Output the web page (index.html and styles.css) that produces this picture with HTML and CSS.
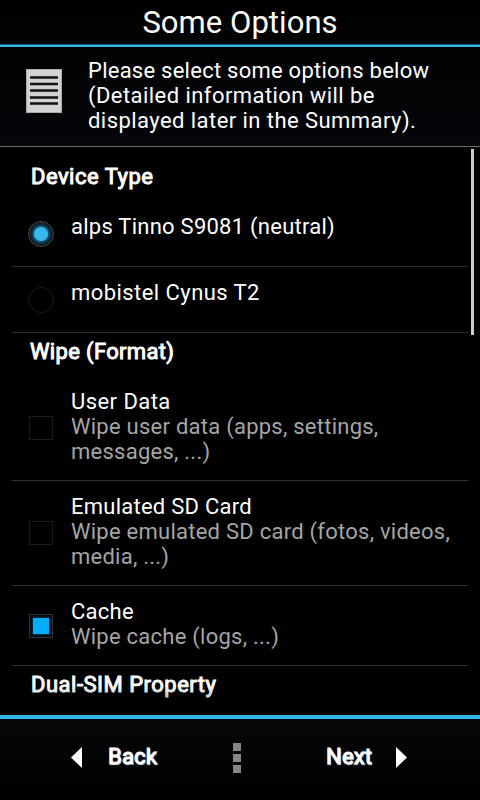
FILE: index.html
```html
<!DOCTYPE html>
<html lang="en">
<head>
<meta charset="utf-8">
<title>Some Options</title>
<link rel="stylesheet" href="styles.css">
</head>
<body>
<div class="screen">
  <header class="title">Some Options</header>
  <section class="intro">
    <svg class="doc" width="36" height="44" viewBox="0 0 36 44">
      <rect width="36" height="44" fill="#aaa"/>
      <rect x="1" y="1" width="34" height="42" fill="#d2d2d2"/>
      <path d="M4 8.5h28M4 15h28M4 21.5h28M4 28.5h28M4 34.5h28" stroke="#111" stroke-width="2.3"/>
    </svg>
    <p>Please select some options below<br><span class="loose">(Detailed information will be<br>displayed later in the Summary).</span></p>
  </section>
  <main class="list">
    <h2 class="first">Device Type</h2>
    <div class="row">
      <span class="mark"><i class="radio on"></i></span>
      <div>alps Tinno S9081 (neutral)</div>
    </div>
    <div class="row">
      <span class="mark"><i class="radio"></i></span>
      <div class="loose">mobistel Cynus T2</div>
    </div>
    <h2 class="tight">Wipe (Format)</h2>
    <div class="row">
      <span class="mark"><i class="check"></i></span>
      <div><span class="loose">User Data</span><p>Wipe user data (apps, settings,<br>messages, ...)</p></div>
    </div>
    <div class="row">
      <span class="mark"><i class="check"></i></span>
      <div>Emulated SD Card<p>Wipe emulated SD card (fotos, videos,<br>media, ...)</p></div>
    </div>
    <div class="row">
      <span class="mark"><i class="check on"></i></span>
      <div>Cache<p>Wipe cache (logs, ...)</p></div>
    </div>
    <h2>Dual-SIM Property</h2>
    <div class="scrollbar"></div>
    <div class="fade"></div>
  </main>
  <footer class="nav">
    <div class="back"><svg width="11" height="21" viewBox="0 0 11 21"><path d="M11 0v21L0 10.5z" fill="#fff"/></svg><span>Back</span></div>
    <div class="menu"><i></i><i></i><i></i></div>
    <div class="next"><span>Next</span><svg width="11" height="21" viewBox="0 0 11 21"><path d="M0 0v21L11 10.5z" fill="#fff"/></svg></div>
  </footer>
</div>
</body>
</html>
```
FILE: styles.css
```css
* { box-sizing: border-box; margin: 0; padding: 0; }
body { background: #000; }
.screen {
  width: 480px; height: 800px; overflow: hidden;
  display: flex; flex-direction: column;
  background: #000; color: #fff;
  font: 22px/25px Roboto, sans-serif;
  letter-spacing: 0.25px;
}
.loose { letter-spacing: 0.44px; }
.title {
  height: 47px; border-bottom: 2px solid #33b5e5;
  box-shadow: inset 0 -1px #1c617b;
  background: linear-gradient(#000, #030404);
  text-align: center; font-size: 31px; line-height: 46px; letter-spacing: 0.05px;
}
.intro {
  height: 100px; display: flex; align-items: flex-start;
  padding: 11px 0 0 26px; gap: 26px;
  background: linear-gradient(#010202, #04060a);
  border-bottom: 1px solid #6c6c70;
}
.doc { margin-top: 11px; flex: none; }
.list { position: relative; height: 568px; overflow: hidden; }
h2 {
  height: 43px; padding: 6px 0 0 31px;
  font-size: 22px; font-weight: 400; letter-spacing: 0.5px;
  -webkit-text-stroke: 1px #fff;
}
h2.first { height: 54px; padding-top: 17px; }
h2.tight { padding-left: 30px; letter-spacing: 0.34px; }
.row {
  margin: 0 12px; min-height: 66px; padding: 13px 0 16px;
  display: flex; border-bottom: 1px solid #303030;
  white-space: nowrap;
}
.row p { color: #a5a5a5; }
.mark { width: 59px; padding-left: 16px; display: flex; align-items: center; margin: -13px 0 -16px; flex: none; }
.radio { width: 26px; height: 26px; border: 1px solid #1c1c20; border-radius: 50%; }
.radio.on {
  border: 1px solid #484848;
  background: radial-gradient(circle, #38b8ec 0 6.5px, #145270 7.5px, #0c2836 10px, #101316 12px);
}
.check { width: 24px; height: 24px; margin-left: 1px; border: 1px solid #1a1a20; }
.check.on { border-color: #333338; background: #000a12; display: flex; align-items: center; justify-content: center; }
.check.on::before { content: ""; width: 16px; height: 16px; background: #04adfc; box-shadow: 0 0 2px 1px #0d3044; }
.scrollbar { position: absolute; right: 6px; top: 2px; width: 3px; height: 186px; background: #ccc; }
.fade { position: absolute; left: 0; right: 0; bottom: 0; height: 30px; background: linear-gradient(transparent, rgba(0, 0, 0, 0.5)); }
.nav {
  height: 85px; border-top: 4px solid #33b5e5;
  background: linear-gradient(#050708, #000);
  display: flex; align-items: flex-start; padding: 24px 0 0 71px;
}
.back, .next {
  display: flex; align-items: center; line-height: 28px; letter-spacing: 0.2px;
  -webkit-text-stroke: 1px #fff; text-shadow: 1px 1px 1px #bbb;
}
.back svg, .next svg { position: relative; top: 0.5px; }
.back { width: 162px; gap: 26px; }
.menu { width: 93px; display: grid; gap: 3px; }
.menu i { width: 8px; height: 8px; background: #85858a; }
.next { gap: 24px; }
```
